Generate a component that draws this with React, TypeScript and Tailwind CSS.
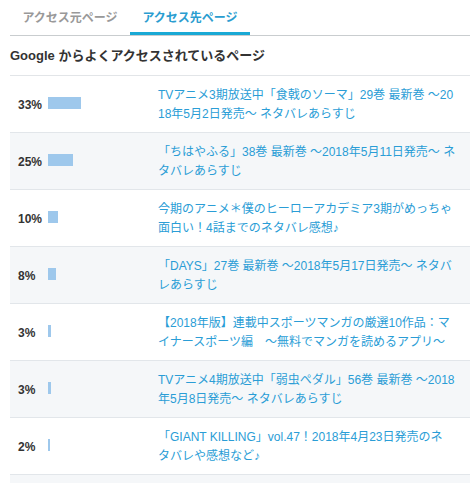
import React, { useState } from "react";

type Row = {
  pct: number;
  lines: string[];
};

const rows: Row[] = [
  {
    pct: 33,
    lines: [
      "TVアニメ3期放送中「食戟のソーマ」29巻 最新巻 〜20",
      "18年5月2日発売〜 ネタバレあらすじ",
    ],
  },
  {
    pct: 25,
    lines: ["「ちはやふる」38巻 最新巻 〜2018年5月11日発売〜 ネ", "タバレあらすじ"],
  },
  {
    pct: 10,
    lines: [
      "今期のアニメ＊僕のヒーローアカデミア3期がめっちゃ",
      "面白い！4話までのネタバレ感想♪",
    ],
  },
  {
    pct: 8,
    lines: ["「DAYS」27巻 最新巻 〜2018年5月17日発売〜 ネタバ", "レあらすじ"],
  },
  {
    pct: 3,
    lines: [
      "【2018年版】連載中スポーツマンガの厳選10作品：マ",
      "イナースポーツ編　〜無料でマンガを読めるアプリ〜",
    ],
  },
  {
    pct: 3,
    lines: [
      "TVアニメ4期放送中「弱虫ペダル」56巻 最新巻 〜2018",
      "年5月8日発売〜 ネタバレあらすじ",
    ],
  },
  {
    pct: 2,
    lines: [
      "「GIANT KILLING」vol.47！2018年4月23日発売のネ",
      "タバレや感想など♪",
    ],
  },
];

const tabs = ["アクセス元ページ", "アクセス先ページ"];

const App = () => {
  const [active, setActive] = useState(1);

  return (
    <div className="h-[483px] overflow-hidden bg-white pl-[10px] pr-[5px] font-['Liberation_Sans','Noto_Sans_CJK_JP',sans-serif] text-[#333]">
      <div className="flex border-b border-[#c9cdcf]">
        {tabs.map((t, i) => (
          <button
            key={t}
            onClick={() => setActive(i)}
            className={
              i === active
                ? "w-[120px] h-[35px] pt-[3px] border-b-[3px] border-[#19a9d5] text-[12px] font-bold text-[#2a9dd0]"
                : "w-[120px] h-[35px] pt-[3px] border-b-[3px] border-transparent text-[12px] font-bold text-[#999]"
            }
          >
            {t}
          </button>
        ))}
      </div>

      <h2 className="h-[40px] flex items-center border-b border-[#e2e5e8] text-[13px] font-bold">
        Google からよくアクセスされているページ
      </h2>

      <ul>
        {rows.map((r, i) => (
          <li
            key={i}
            className={
              i % 2 === 1
                ? "h-[57px] flex items-center pl-2 pr-2 border-b border-[#e2e6ea] bg-[#f5f7f9]"
                : "h-[57px] flex items-center pl-2 pr-2 border-b border-[#e2e6ea] bg-white"
            }
          >
            <span className="w-[30px] pt-[1px] text-[12px] font-bold text-[#333]">
              {r.pct}%
            </span>
            <div className="w-[110px] flex">
              <span
                className="h-[12px] mb-[3px] bg-[#9ec8ec]"
                style={{ width: r.pct }}
              />
            </div>
            <a
              href="#"
              className="flex-1 pt-[2px] text-[12px] leading-[19px] text-[#2a9dd6]"
            >
              {r.lines.map((l, j) => (
                <span key={j} className="block whitespace-nowrap">
                  {l}
                </span>
              ))}
            </a>
          </li>
        ))}
        <li className="h-[57px] bg-[#f5f7f9]" />
      </ul>
    </div>
  );
};

export default App;
